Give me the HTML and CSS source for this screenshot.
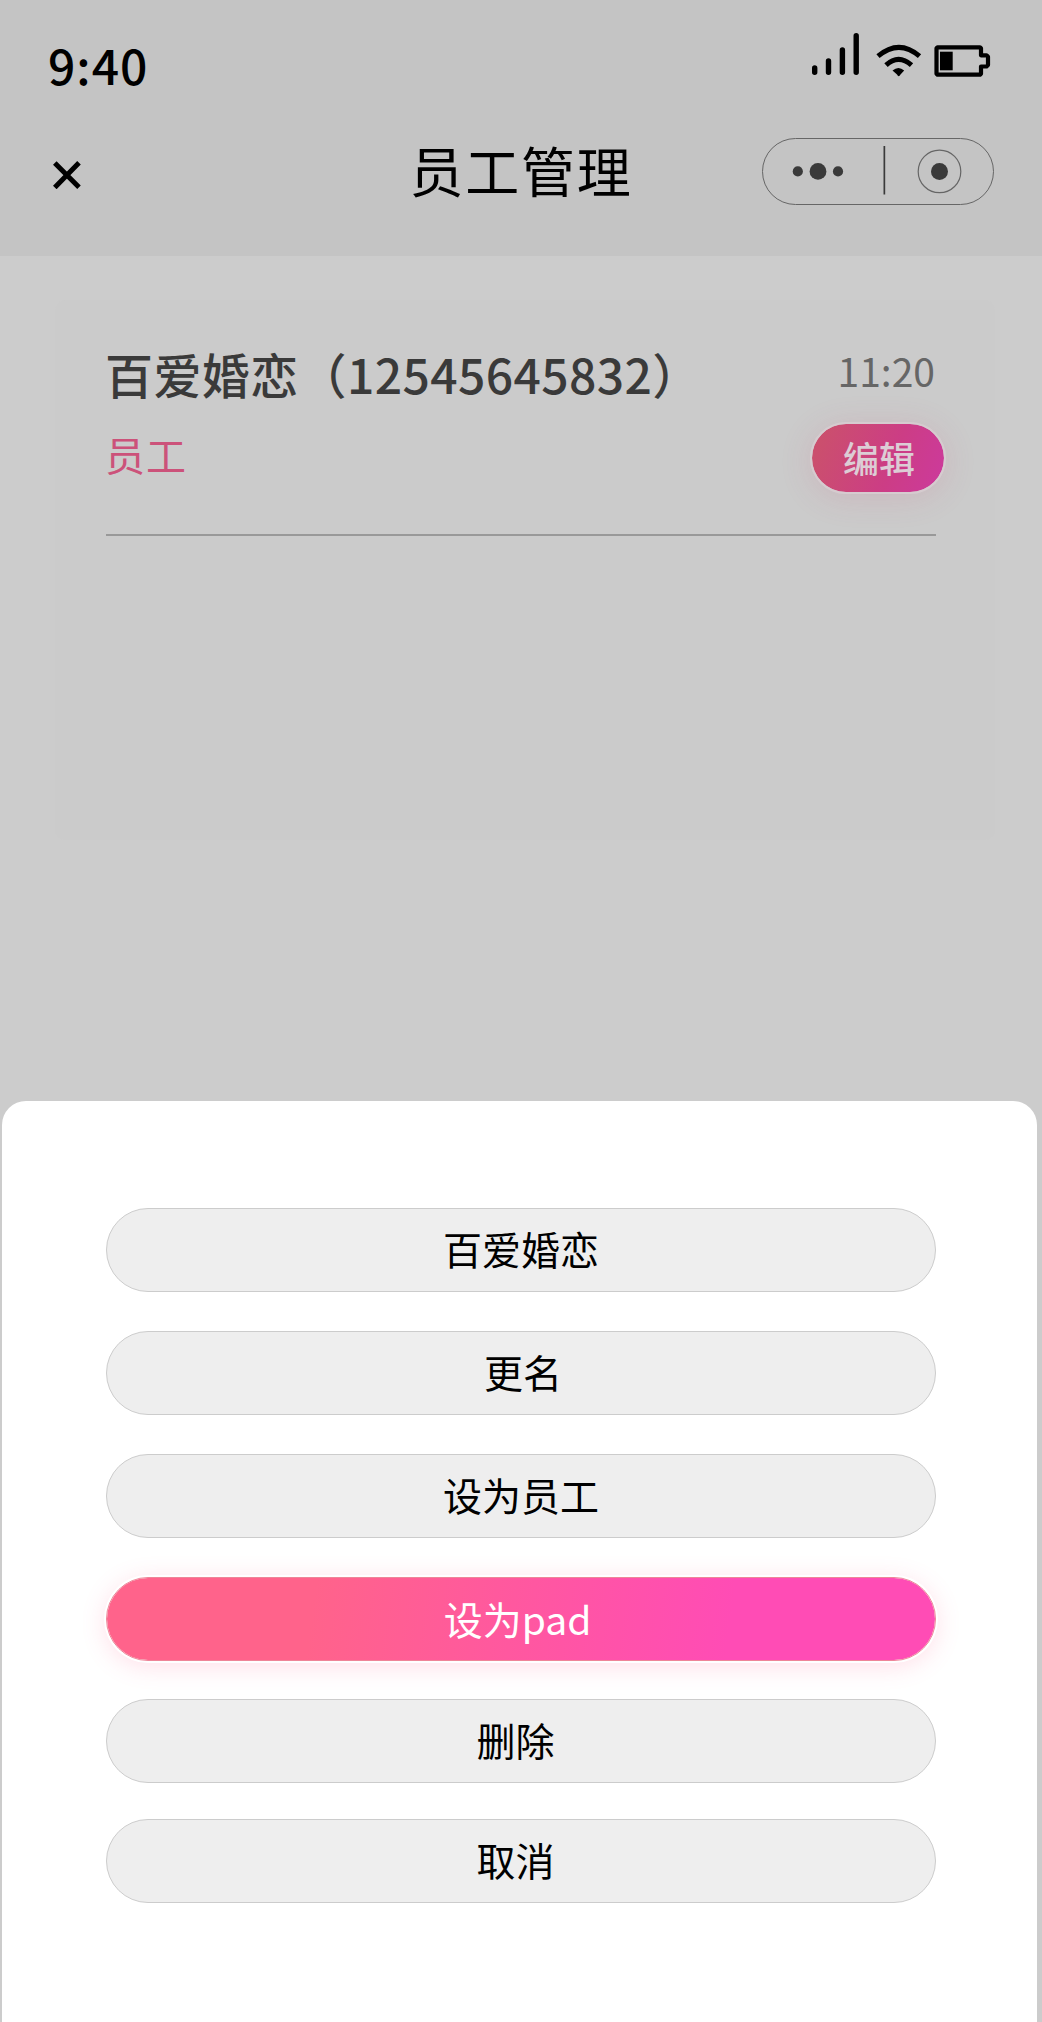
FILE: index.html
```html
<!DOCTYPE html>
<html lang="zh-CN">
<head>
    <meta charset="UTF-8">
    <title>员工管理</title>
    <link rel="stylesheet" href="styles.css">
</head>
<body>
    <div class="page">
        <div class="header">
            <div class="status">
                <div class="clock">9:40</div>
                <svg class="status-icons" width="180" height="46" viewBox="0 0 180 46" fill="none" stroke="#000">
                    <path stroke-width="5.4" stroke-linecap="round" d="M2.7 35v4.200M16.500 28v11.200M30.400 17v22.200M44.200 2.700v36.500"/>
                    <path stroke-width="5" d="M66 23.200Q87 5.500 107.500 23.200M74 32.200Q86.500 20.600 99.500 32.200"/>
                    <path fill="#000" stroke="none" d="M80.500 37.500Q86.500 32.500 92.200 37.500L88.500 41.500Q86.700 45 85 41.500Z"/>
                    <path stroke-width="4.200" stroke-linejoin="round" d="M125.500 14.300H168L169 15.300V22.300H174.500L176 23.800V32L174.500 33.500H169V40.700L168 41.700H125.500L124.500 40.700V15.300Z"/>
                    <path fill="#000" stroke="none" d="M128 18.700h12.700v18.600H128z"/>
                </svg>
            </div>
            <div class="nav">
                <svg class="close" width="28" height="28" viewBox="0 0 28 28" stroke="#000" stroke-width="5">
                    <path d="M1.800 2L26 26.200M26 1.800L1.800 26.500"/>
                </svg>
                <h1 class="title">员工管理</h1>
                <div class="capsule">
                    <svg width="230" height="65" viewBox="0 0 230 65" fill="#3a3a3a">
                        <circle cx="34.800" cy="32.400" r="5.100"/>
                        <circle cx="55" cy="32.400" r="8.400"/>
                        <circle cx="75" cy="32.400" r="5.100"/>
                        <path d="M120.500 7h1.700v48.500h-1.700z"/>
                        <circle cx="176.500" cy="32.400" r="21.300" fill="none" stroke="#666" stroke-width="1.200"/>
                        <circle cx="176.500" cy="32.400" r="8.500"/>
                    </svg>
                </div>
            </div>
        </div>

        <div class="list">
            <div class="card">
                <div class="item">
                    <div class="info">
                        <div class="name">百爱婚恋（12545645832）</div>
                        <div class="role">员工</div>
                    </div>
                    <div class="side">
                        <div class="time">11:20</div>
                        <div class="edit">编辑</div>
                    </div>
                </div>
            </div>
        </div>

        <div class="sheet">
            <div class="option">百爱婚恋</div>
            <div class="option rename">更名</div>
            <div class="option">设为员工</div>
            <div class="option active">设为pad</div>
            <div class="option delete">删除</div>
            <div class="option cancel">取消</div>
        </div>
    </div>
</body>
</html>
```
FILE: styles.css
```css
* {
    box-sizing: border-box;
}
body {
    margin: 0;
    font-family: "Noto Sans CJK SC", sans-serif;
    color: #000;
}
.page {
    display: flex;
    flex-direction: column;
    width: 1042px;
    height: 2022px;
    overflow: hidden;
    background-color: #ccc;
}
.header {
    height: 256px;
    padding: 29px 48px 0;
    background-color: #c4c4c4;
}
.status {
    display: flex;
    justify-content: space-between;
    height: 83px;
}
.clock {
    font-size: 48px;
    font-weight: 500;
    line-height: 70px;
    letter-spacing: 1px;
}
.status-icons {
    margin-top: 4px;
    margin-right: 2px;
}
.nav {
    display: grid;
    grid-template-columns: 232px 1fr 232px;
    align-items: center;
    height: 118px;
}
.close {
    margin: 8px 0 0 5px;
}
.title {
    margin: 0 0 2px;
    font-size: 54px;
    font-weight: 400;
    line-height: 80px;
    letter-spacing: 1.7px;
    text-align: center;
}
.capsule {
    height: 67px;
    border: 1px solid #666;
    border-radius: 34px;
}
.list {
    height: 845px;
    padding: 44px 47px 0 55px;
}
.card {
    height: 540px;
    padding: 35px 59px 0 51px;
    border-radius: 10px;
    background-color: #cbcbcb;
}
.item {
    display: flex;
    justify-content: space-between;
    height: 201px;
    border-bottom: 2px solid #999;
}
.info {
    margin-left: -1px;
}
.name {
    font-size: 48px;
    font-weight: 500;
    line-height: 76px;
    letter-spacing: 0.4px;
    color: #3a3a3a;
}
.role {
    margin-top: 15px;
    font-size: 40px;
    line-height: 56px;
    letter-spacing: 1px;
    color: #cc527a;
}
.side {
    display: flex;
    flex-direction: column;
    align-items: flex-end;
}
.time {
    margin: 5px 1px 0 0;
    font-size: 39px;
    line-height: 60px;
    color: #666;
}
.edit {
    width: 136px;
    height: 72px;
    margin: 22px -10px 0 0;
    padding-left: 2px;
    border: 2px solid #d6cbcf;
    border-radius: 36px;
    background: linear-gradient(110deg, #cb4f6e 10%, #cc3d85 60%, #cc3a9a 95%) padding-box;
    box-shadow: 0 4px 32px rgba(204, 80, 120, 0.16);
    font-size: 36px;
    font-weight: 500;
    line-height: 66px;
    text-align: center;
    color: #dccdd5;
}
.sheet {
    flex: 1;
    width: 1035px;
    margin-left: 2px;
    padding: 107px 101px 0 104px;
    border-radius: 24px 24px 0 0;
    background-color: #fff;
}
.option {
    height: 84px;
    margin-bottom: 39px;
    border: 1px solid #ccc;
    border-radius: 42px;
    background-color: #eee;
    font-size: 39px;
    line-height: 79px;
    text-align: center;
}
.option.rename {
    padding-left: 4px;
}
.option.active {
    margin-bottom: 38px;
    padding-right: 7px;
    border-color: #ee8598;
    background: linear-gradient(98deg, #ff638b 25%, #ff4cb5 75%) padding-box;
    box-shadow: 0 0 0 2px #fff, 0 4px 26px rgba(255, 80, 130, 0.2);
    line-height: 81px;
    color: #fff;
}
.option.delete,
.option.cancel {
    padding-right: 11px;
}
.option.cancel {
    margin-top: -3px;
}
```
